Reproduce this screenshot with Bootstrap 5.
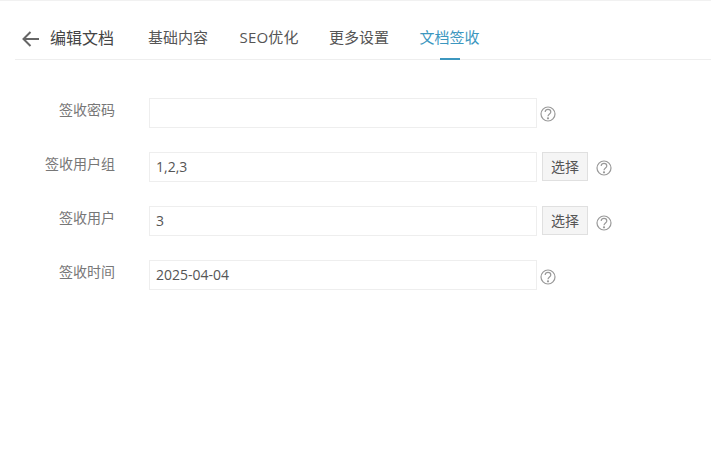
<!DOCTYPE html>
<html lang="zh">
<head>
<meta charset="utf-8">
<title>编辑文档</title>
<link href="https://cdn.jsdelivr.net/npm/bootstrap@5.3.0/dist/css/bootstrap.min.css" rel="stylesheet">
<style>
html,body{height:451px;overflow:hidden}
body{font-family:"Open Sans","Noto Sans CJK SC",sans-serif;font-size:14px;color:#555;background:#fff;border-top:1px solid #f1f1f1}
.head-bar{margin-left:15px;height:59px;border-bottom:1px solid #eee;padding-left:7px}
.back-ico{width:18px;height:18px;margin-top:29px;flex:none}
.head-title{font-size:16px;color:#444;margin-left:10px;width:98px;flex:none;line-height:24px;margin-top:25px}
.tab-link{color:#555;text-decoration:none;font-size:15px;width:60px;flex:none;white-space:nowrap;height:59px;line-height:20px;padding-top:26px;margin-right:30.5px;position:relative}
.tab-seo{padding-left:1px;letter-spacing:.2px}
.tab-on{color:#3c97bf}
.tab-on::after{content:"";position:absolute;left:20px;width:20px;height:2px;bottom:0;background:#3c97bf}
.form-area{padding-top:38px}
.f-row{height:30px;margin-bottom:24px}
.f-label{width:115px;text-align:right;color:#777;line-height:24px;flex:none}
.f-input{width:388px;height:30px;margin-left:34px;border:1px solid #eee;border-radius:0;padding:3px 6px 5px;font-size:14px;color:#555;flex:none;font-family:inherit;box-shadow:none}
.f-btn{width:46px;height:29px;margin-left:5px;padding:0;font-size:14px;line-height:26px;background:#f5f5f5;border:1px solid #e0e0e0;border-radius:0;color:#555}
.q-ico{width:16px;height:16px;margin-top:8px;flex:none;margin-left:2.5px}
.q-gap{margin-left:7.5px}
.q-low{margin-top:9px}
</style>
</head>
<body>
<div class="head-bar d-flex align-items-start">
  <svg class="back-ico" viewBox="0 0 18 18" fill="none" stroke="#666" stroke-width="2"><path d="M1.5 9H17M8.5 2 1.5 9l7 7"/></svg>
  <div class="head-title">编辑文档</div>
  <a class="tab-link" href="#">基础内容</a>
  <a class="tab-link tab-seo" href="#">SEO优化</a>
  <a class="tab-link" href="#">更多设置</a>
  <a class="tab-link tab-on" href="#">文档签收</a>
</div>
<form class="form-area">
  <div class="f-row d-flex align-items-start">
    <div class="f-label">签收密码</div>
    <input class="form-control f-input" value="">
    <svg class="q-ico" viewBox="0 0 16 16" fill="none" stroke="#999" stroke-width="1.2"><circle cx="8" cy="8" r="7"/><path d="M5.2 6C5.2 4.4 6.4 3.3 8 3.3s2.8 1.1 2.8 2.6c0 2-2.8 2.2-2.8 4.4"/><circle cx="8" cy="12.3" r=".5"/></svg>
  </div>
  <div class="f-row d-flex align-items-start">
    <div class="f-label">签收用户组</div>
    <input class="form-control f-input" value="1,2,3">
    <button type="button" class="btn f-btn">选择</button>
    <svg class="q-ico q-gap" viewBox="0 0 16 16" fill="none" stroke="#999" stroke-width="1.2"><circle cx="8" cy="8" r="7"/><path d="M5.2 6C5.2 4.4 6.4 3.3 8 3.3s2.8 1.1 2.8 2.6c0 2-2.8 2.2-2.8 4.4"/><circle cx="8" cy="12.3" r=".5"/></svg>
  </div>
  <div class="f-row d-flex align-items-start">
    <div class="f-label">签收用户</div>
    <input class="form-control f-input" value="3">
    <button type="button" class="btn f-btn">选择</button>
    <svg class="q-ico q-gap q-low" viewBox="0 0 16 16" fill="none" stroke="#999" stroke-width="1.2"><circle cx="8" cy="8" r="7"/><path d="M5.2 6C5.2 4.4 6.4 3.3 8 3.3s2.8 1.1 2.8 2.6c0 2-2.8 2.2-2.8 4.4"/><circle cx="8" cy="12.3" r=".5"/></svg>
  </div>
  <div class="f-row d-flex align-items-start">
    <div class="f-label">签收时间</div>
    <input class="form-control f-input" value="2025-04-04">
    <svg class="q-ico q-low" viewBox="0 0 16 16" fill="none" stroke="#999" stroke-width="1.2"><circle cx="8" cy="8" r="7"/><path d="M5.2 6C5.2 4.4 6.4 3.3 8 3.3s2.8 1.1 2.8 2.6c0 2-2.8 2.2-2.8 4.4"/><circle cx="8" cy="12.3" r=".5"/></svg>
  </div>
</form>
<script src="https://cdn.jsdelivr.net/npm/bootstrap@5.3.0/dist/js/bootstrap.bundle.min.js"></script>
</body>
</html>
